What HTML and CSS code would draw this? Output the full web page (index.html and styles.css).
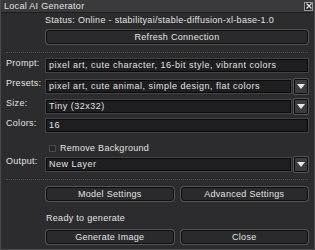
FILE: index.html
```html
<!DOCTYPE html>
<html lang="en">
<head>
    <meta charset="UTF-8">
    <title>Local AI Generator</title>
    <link rel="stylesheet" href="styles.css">
</head>
<body>
    <div class="window">
        <div class="titlebar">
            <span class="title">Local AI Generator</span>
            <span class="close-x">
                <svg width="6" height="6" viewBox="0 0 6 6"><path d="M0.5 0.5 L5.5 5.5 M5.5 0.5 L0.5 5.5" stroke="#e6e6e6" stroke-width="1.2"/></svg>
            </span>
        </div>
        <div class="content">
            <div class="status">Status: Online - stabilityai/stable-diffusion-xl-base-1.0</div>
            <button class="btn refresh">Refresh Connection</button>
            <div class="sep"></div>

            <div class="row">
                <label>Prompt:</label>
                <div class="field">pixel art, cute character, 16-bit style, vibrant colors</div>
            </div>
            <div class="row">
                <label>Presets:</label>
                <div class="select">
                    <div class="field">pixel art, cute animal, simple design, flat colors</div>
                    <span class="arrow"><svg width="8" height="5" viewBox="0 0 8 5"><path d="M0 0 H8 L4 5 Z" fill="#e8e8e8"/></svg></span>
                </div>
            </div>
            <div class="row">
                <label>Size:</label>
                <div class="select">
                    <div class="field">Tiny (32x32)</div>
                    <span class="arrow"><svg width="8" height="5" viewBox="0 0 8 5"><path d="M0 0 H8 L4 5 Z" fill="#e8e8e8"/></svg></span>
                </div>
            </div>
            <div class="row">
                <label>Colors:</label>
                <div class="field">16</div>
            </div>
            <div class="check-row">
                <span class="box"></span>
                <span>Remove Background</span>
            </div>
            <div class="row">
                <label>Output:</label>
                <div class="select">
                    <div class="field">New Layer</div>
                    <span class="arrow"><svg width="8" height="5" viewBox="0 0 8 5"><path d="M0 0 H8 L4 5 Z" fill="#e8e8e8"/></svg></span>
                </div>
            </div>
            <div class="sep sep-low"></div>

            <div class="btn-pair">
                <button class="btn">Model Settings</button>
                <button class="btn">Advanced Settings</button>
            </div>
            <div class="ready">Ready to generate</div>
            <div class="btn-pair">
                <button class="btn">Generate Image</button>
                <button class="btn">Close</button>
            </div>
        </div>
    </div>
</body>
</html>
```
FILE: styles.css
```css
body {
    margin: 0;
    background: #1c1c1e;
    font-family: "Liberation Sans", Arial, sans-serif;
    font-size: 9px;
    letter-spacing: 0.3px;
    color: #e2e2e2;
}

.window {
    width: 313px;
    height: 249px;
    background: #2c2c2e;
    border: 1px solid #4a4a4c;
    border-top: none;
    overflow: hidden;
}

.titlebar {
    height: 12px;
    background: #3a3a3c;
    border-bottom: 1px solid #1e1e20;
    display: flex;
    align-items: center;
    justify-content: space-between;
    padding: 0 1px 0 3px;
}

.close-x {
    width: 7px;
    height: 7px;
    border: 1px solid #9a9a9a;
    background: #2a2a2c;
    display: flex;
    align-items: center;
    justify-content: center;
}

.content {
    padding: 0 6px 0 5px;
}

.status {
    height: 16px;
    line-height: 15px;
    padding-left: 39px;
}

.btn {
    font-family: inherit;
    font-size: inherit;
    letter-spacing: inherit;
    color: #e2e2e2;
    background: #2a2a2c;
    border: 1px solid #0e0e10;
    border-radius: 3px;
    box-shadow: 0 0 0 1px #545456;
    height: 13px;
    padding: 0;
}

.refresh {
    display: block;
    margin: 1px 0 0 40px;
    width: 262px;
    height: 14px;
}

.sep {
    border-top: 1px dotted #4e4e50;
    margin: 8px 0 6px;
}

.row {
    display: grid;
    grid-template-columns: 40px 1fr;
    align-items: start;
    height: 20px;
}

.row label {
    line-height: 9px;
}

.field {
    height: 11px;
    line-height: 11px;
    background: #1e1e20;
    border: 1px solid #0a0a0c;
    box-shadow: 0 0 0 1px #444446;
    padding-left: 2px;
    letter-spacing: 0.5px;
    white-space: nowrap;
    overflow: hidden;
}

.select {
    display: flex;
    align-items: center;
    gap: 3px;
}

.select .field {
    flex: 1;
}

.arrow {
    width: 12px;
    height: 13px;
    background: #3c3c3e;
    border: 1px solid #0e0e10;
    border-radius: 1px;
    box-shadow: 0 0 0 1px #545456;
    display: flex;
    align-items: center;
    justify-content: center;
}

.check-row {
    display: flex;
    align-items: center;
    gap: 4px;
    height: 18px;
    padding-left: 43px;
}

.box {
    width: 5px;
    height: 5px;
    border: 1px solid #4a4a4c;
    background: #262628;
}

.sep-low {
    margin: 2px 0 7px;
}

.btn-pair {
    display: grid;
    grid-template-columns: 1fr 1fr;
    gap: 7px;
    padding-left: 40px;
}

.btn-pair .btn {
    height: 14px;
}

.ready {
    height: 29px;
    line-height: 34px;
    padding-left: 40px;
}
```
